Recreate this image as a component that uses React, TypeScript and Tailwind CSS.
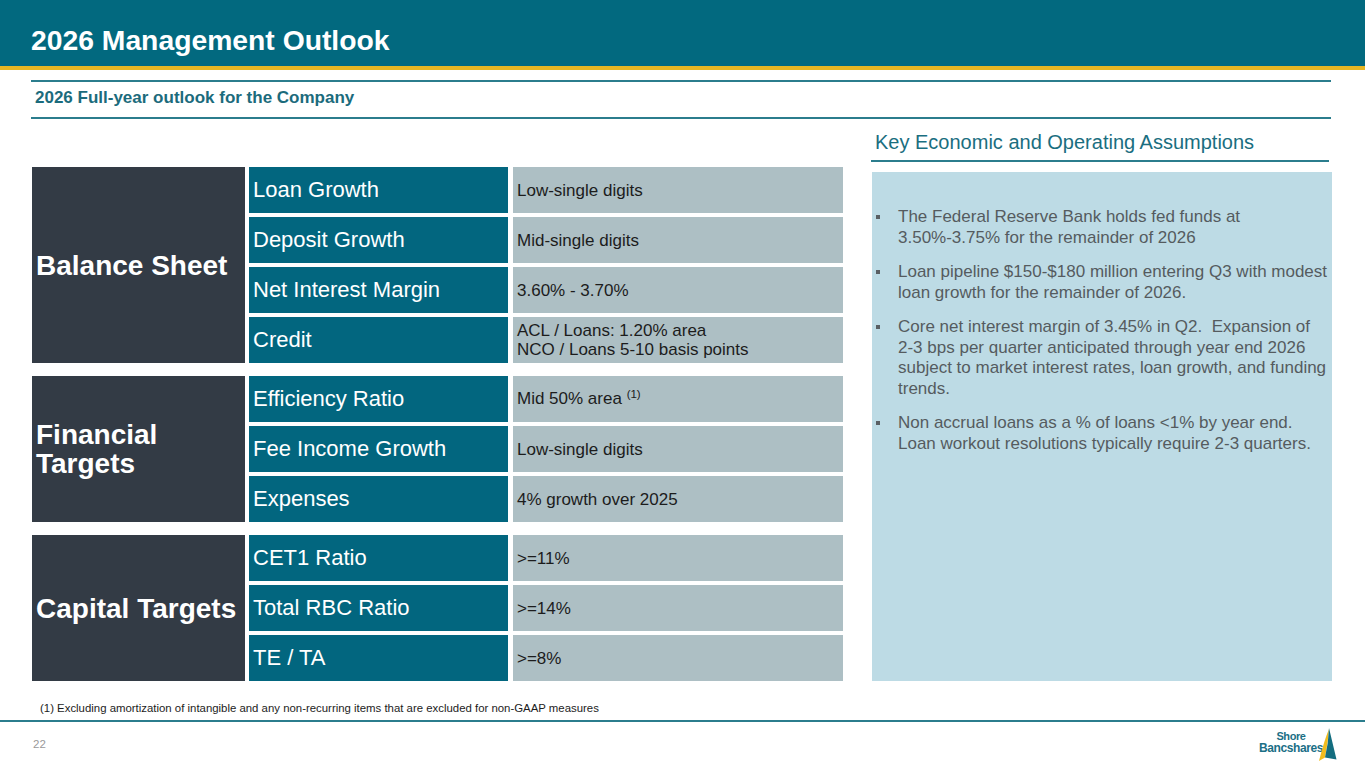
import React from "react";

type Row = { label: string; value: React.ReactNode };

const groups: { title: string; rows: Row[] }[] = [
  {
    title: "Balance Sheet",
    rows: [
      { label: "Loan Growth", value: "Low-single digits" },
      { label: "Deposit Growth", value: "Mid-single digits" },
      { label: "Net Interest Margin", value: "3.60% - 3.70%" },
      {
        label: "Credit",
        value: (
          <>
            ACL / Loans: 1.20% area
            <br />
            NCO / Loans 5-10 basis points
          </>
        ),
      },
    ],
  },
  {
    title: "Financial Targets",
    rows: [
      {
        label: "Efficiency Ratio",
        value: (
          <>
            Mid 50% area <span className="text-[11.5px] relative top-[-6px]">(1)</span>
          </>
        ),
      },
      { label: "Fee Income Growth", value: "Low-single digits" },
      { label: "Expenses", value: "4% growth over 2025" },
    ],
  },
  {
    title: "Capital Targets",
    rows: [
      { label: "CET1 Ratio", value: ">=11%" },
      { label: "Total RBC Ratio", value: ">=14%" },
      { label: "TE / TA", value: ">=8%" },
    ],
  },
];

const bullets: string[][] = [
  ["The Federal Reserve Bank holds fed funds at", "3.50%-3.75% for the remainder of 2026"],
  ["Loan pipeline $150-$180 million entering Q3 with modest", "loan growth for the remainder of 2026."],
  [
    "Core net interest margin of 3.45% in Q2.\u00a0 Expansion of",
    "2-3 bps per quarter anticipated through year end 2026",
    "subject to market interest rates, loan growth, and funding",
    "trends.",
  ],
  ["Non accrual loans as a % of loans <1% by year end.", "Loan workout resolutions typically require 2-3 quarters."],
];

function Group({ title, rows }: { title: string; rows: Row[] }) {
  return (
    <div className="flex">
      <div className="w-[213px] bg-[#333b45] flex items-center pl-[4px] pr-[2px]">
        <span className="text-white font-bold text-[28px] leading-[29px]">{title}</span>
      </div>
      <div className="ml-[4px] flex flex-col gap-[4px]">
        {rows.map((r) => (
          <div key={r.label} className="flex h-[46px]">
            <div className="w-[259px] bg-[#02667f] flex items-center pl-[4px]">
              <span className="text-white text-[22px] leading-[26px]">{r.label}</span>
            </div>
            <div className="ml-[5px] w-[330px] bg-[#adbfc4] flex items-center pl-[4px]">
              <span className="text-[#1c1c1c] text-[17px] leading-[19px]">{r.value}</span>
            </div>
          </div>
        ))}
      </div>
    </div>
  );
}

function Logo() {
  return (
    <div className="flex items-start pt-[5px] pr-[27px]">
      <div className="flex flex-col items-center mt-[3px] text-[#1b6f86] font-bold">
        <span className="text-[11px] leading-[12px] tracking-[-0.4px]">Shore</span>
        <span className="text-[12px] leading-[12px] tracking-[-0.4px]">Bancshares</span>
      </div>
      <svg width="22" height="36" viewBox="0 0 22 36" className="-ml-[7px] -mt-[1px]">
        <path d="M13 3 Q8 15 3 35 L9 31.5 Q12 17 13 3 Z" fill="#f0bc1e" />
        <path d="M13 2 L20.5 33.5 L9 31.5 Q12.5 17 13 2 Z" fill="#136d7f" />
      </svg>
    </div>
  );
}

export default function App() {
  return (
    <div className="w-[1365px] h-[768px] overflow-hidden bg-white font-['Liberation_Sans',Arial,sans-serif] flex flex-col">
      <div className="h-[66px] bg-[#02697f] pt-[24px] pl-[31px] shrink-0">
        <h1 className="text-white font-bold text-[28.3px] leading-[32px]">2026 Management Outlook</h1>
      </div>
      <div className="h-[4px] bg-[#e6b623] shrink-0" />
      <div className="mt-[10px] h-[2px] ml-[31px] w-[1300px] bg-[#2b7d8d] shrink-0" />
      <div className="mt-[6px] pl-[35px] text-[17px] leading-[20px] font-bold text-[#1b6b7c] shrink-0">
        2026 Full-year outlook for the Company
      </div>
      <div className="mt-[9px] h-[2px] ml-[31px] w-[1300px] bg-[#2b7d8d] shrink-0" />

      <div className="h-[582px] flex shrink-0">
        <div className="ml-[32px] pt-[48px] w-[811px] flex flex-col gap-[13px]">
          {groups.map((g) => (
            <Group key={g.title} title={g.title} rows={g.rows} />
          ))}
        </div>
        <div className="ml-[28px] w-[461px] pt-[11px] flex flex-col">
          <div className="pl-[4px] text-[20px] leading-[24px] text-[#1a6e80]">
            Key Economic and Operating Assumptions
          </div>
          <div className="mt-[6px] h-[2px] w-[458px] bg-[#2b7d8d]" />
          <div className="mt-[10px] ml-[1px] w-[460px] h-[509px] bg-[#bddbe5] pt-[35px] pl-[4px] flex flex-col gap-[14px]">
            {bullets.map((b, i) => (
              <div key={i} className="flex">
                <div className="w-[22px] shrink-0 h-[20.5px] flex items-center">
                  <span className="block w-[4px] h-[4px] bg-[#5a5f63]" />
                </div>
                <div className="text-[17px] leading-[20.5px] text-[#555b5f] whitespace-nowrap">
                  {b.map((line, j) => (
                    <div key={j}>{line}</div>
                  ))}
                </div>
              </div>
            ))}
          </div>
        </div>
      </div>

      <div className="h-[19px] pl-[40px] text-[11.4px] leading-[14px] text-[#1c1c1c] shrink-0">
        (1) Excluding amortization of intangible and any non-recurring items that are excluded for non-GAAP measures
      </div>
      <div className="h-[2px] w-full bg-[#2b7d8d] shrink-0" />
      <div className="h-[46px] flex justify-between items-start shrink-0">
        <div className="pl-[33px] pt-[15px] text-[11.5px] leading-[14px] text-[#9a9a9a]">22</div>
        <Logo />
      </div>
    </div>
  );
}
